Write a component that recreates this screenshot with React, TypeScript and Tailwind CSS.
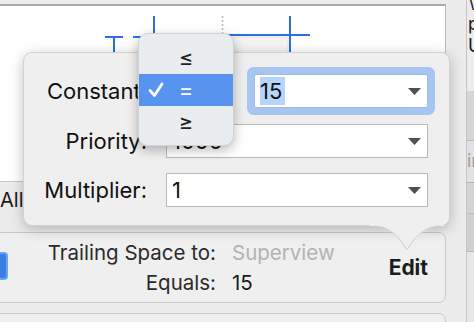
import React from "react";

const Caret = () => (
  <svg width="13" height="7" viewBox="0 0 13 7" className="shrink-0">
    <polygon points="0,0 13,0 6.5,7" fill="#4f4f4f" />
  </svg>
);

const Field = ({ value, focused }: { value: string; focused?: boolean }) => (
  <div
    className={
      "flex-1 h-[34px] bg-white flex items-center justify-between pl-[5px] pr-[6px] border " +
      (focused
        ? "border-[#9cbce6] rounded-[2px] shadow-[0_0_0_7px_#a6c6f1]"
        : "border-[#b9b9b9]")
    }
  >
    <span
      className={
        "leading-[28px] text-[#111] " + (focused ? "bg-[#b5d5fd] pr-[3px]" : "")
      }
    >
      {value}
    </span>
    <Caret />
  </div>
);

const rows = [
  { label: "Priority:", value: "1000" },
  { label: "Multiplier:", value: "1" },
];

export default function App() {
  return (
    <div className="relative w-[474px] h-[322px] overflow-hidden bg-[#ececec] flex font-['Inter',sans-serif]">
      {/* main column */}
      <div className="w-[466px] shrink-0 relative">
        <div className="-ml-[12px] w-[458px] pt-[4px]">
          {/* canvas */}
          <div className="relative h-[178px] bg-white border-t-2 border-t-[#a9a9a9] border-r border-r-[#bababa] border-b border-b-[#c6c6c6]">
            <svg
              className="absolute left-[12px] top-0"
              width="434"
              height="170"
              viewBox="0 6 434 170"
            >
              <rect x="160" y="37" width="128" height="24" fill="#f3f3f3" stroke="#e3e3e3" />
              <rect x="105" y="36" width="18" height="2" fill="#2a6fe6" />
              <rect x="113" y="36" width="2" height="24" fill="#2a6fe6" />
              <rect x="133" y="36" width="20" height="2" fill="#2a6fe6" />
              <rect x="153" y="16" width="2" height="20" fill="#2a6fe6" />
              <line x1="222.5" y1="16" x2="222.5" y2="34" stroke="#b8b8b8" strokeWidth="1.5" strokeDasharray="2 2" />
              <rect x="226" y="34" width="84" height="2" fill="#2a6fe6" />
              <rect x="289" y="16" width="2" height="44" fill="#2a6fe6" />
            </svg>
          </div>

          {/* segmented row */}
          <div className="h-[50px] pl-[12px] pt-[6px] text-[20px] leading-[24px] text-[#1a1a1a]">All</div>

          {/* constraint card */}
          <div className="h-[71px] rounded-[7px] border border-[#c9c9c9] bg-[#efefef] flex items-start">
            <div className="mt-[19px] ml-[2px] w-[17px] h-[28px] rounded-[4px] bg-[#3b7fe2] border-2 border-[#6fa2ec] shrink-0" />
            <div className="grid grid-cols-[208px_auto] gap-x-[16px] mt-[5px] text-[20.5px] leading-[30px]">
              <span className="text-right text-[#2b2b2b]">Trailing Space to:</span>
              <span className="text-[#b3b3b3]">Superview</span>
              <span className="text-right text-[#2b2b2b]">Equals:</span>
              <span className="text-[#1c1c1c]">15</span>
            </div>
            <span className="ml-auto mr-[17px] mt-[20px] text-[21px] leading-[30px] font-bold text-[#1c1c1c]">Edit</span>
          </div>

          {/* next card */}
          <div className="mt-[10px] h-[40px] rounded-[7px] border border-[#c9c9c9] bg-[#efefef]" />
        </div>

        {/* popover */}
        <div className="absolute left-[23px] top-[52px] w-[427px] h-[174px] rounded-[9px] bg-[#efefef] border border-[#d2d2d2] shadow-[0_3px_14px_rgba(0,0,0,0.24)] pt-[21px] pr-[21px] text-[22px] text-[#111]">
          <div className="flex items-center h-[34px]">
            <span className="w-[123px] text-right">Constant:</span>
            <div className="ml-[19px] w-[68px] h-[30px]" />
            <div className="ml-[20px] flex-1 flex">
              <Field value="15" focused />
            </div>
          </div>
          {rows.map((r, i) => (
            <div key={r.label} className={"flex items-center h-[34px] " + (i === 0 ? "mt-[16px]" : "mt-[15px]")}>
              <span className="w-[123px] text-right">{r.label}</span>
              <div className="ml-[19px] flex-1 flex">
                <Field value={r.value} />
              </div>
            </div>
          ))}
        </div>
        {/* popover arrow */}
        <svg className="absolute left-[370px] top-[224px]" width="74" height="30" viewBox="0 0 74 30">
          <path d="M0,2 C14,2 24,6 37,26 C50,6 60,2 74,2 L74,0 L0,0 Z" fill="#efefef" />
          <path d="M4,2 C18,3 26,8 37,26 C48,8 56,3 70,2" fill="none" stroke="#cdcdcd" strokeWidth="1" />
        </svg>

        {/* relation menu */}
        <div className="absolute left-[138px] top-[33px] w-[96px] h-[113px] rounded-[10px] bg-[#e9edef] border border-[#cfd3d5] shadow-[0_4px_12px_rgba(0,0,0,0.28)] pt-[8px] text-[22px] text-[#222] overflow-hidden">
          <div className="h-[32px] flex items-center justify-center">≤</div>
          <div className="relative h-[32px] flex items-center justify-center bg-[#5893ef] text-white">
            <svg className="absolute left-[9px] top-[8px]" width="16" height="16" viewBox="0 0 16 16">
              <polyline points="2,8.5 6.5,13.5 14,2" fill="none" stroke="white" strokeWidth="2.8" strokeLinecap="round" strokeLinejoin="round" />
            </svg>
            =
          </div>
          <div className="h-[32px] flex items-center justify-center">≥</div>
        </div>
      </div>

      {/* right inspector strip */}
      <div className="w-[8px] shrink-0 border-l border-[#c4c4c4] flex flex-col text-[18px] leading-[22px] text-[#1a1a1a] overflow-hidden">
        <div className="h-[100px] -mt-[9px] pl-[1px] flex flex-col">
          <span>\</span>
          <span>p</span>
          <span>U</span>
        </div>
        <div className="h-[50px] bg-[#d6d6d6] border-b border-[#bdbdbd]" />
        <div className="h-[42px] bg-[#e2e2e2] border-b border-[#b3b3b3] text-[#9d9d9d] leading-[40px]">ir</div>
        <div className="h-[31px] bg-[#d4d4d4] border-b border-[#bcbcbc]" />
        <div className="h-[38px] bg-[#d0d0d0] border-b border-[#bcbcbc]" />
        <div className="flex-1 bg-[#e8e8e8]" />
      </div>
    </div>
  );
}
